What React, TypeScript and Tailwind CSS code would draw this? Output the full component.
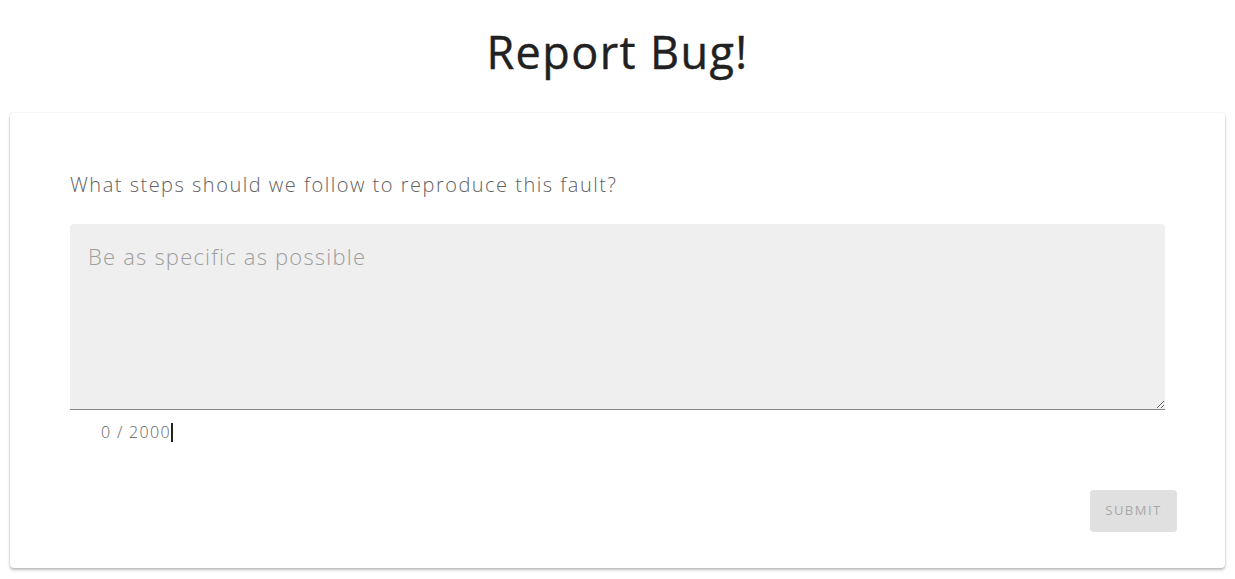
import React, { useState } from 'react';

export default function App() {
  const [text, setText] = useState('');
  const MAX = 2000;

  return (
    <div className="min-h-screen bg-white px-[10px] pt-[24px] font-['Open_Sans','Noto_Sans',sans-serif]">
      <h1 className="text-center text-[45px] leading-[56px] font-normal tracking-[1.4px] text-[#212121] [-webkit-text-stroke:0.4px_#212121]">Report Bug!</h1>

      <div className="mt-[33px] rounded-[4px] bg-white shadow-[0_2px_3px_rgba(0,0,0,0.25),0_0_2px_rgba(0,0,0,0.12)] pt-[58px] pb-[36px]">
        <div className="px-[60px]">
          <p className="text-[20px] leading-[28px] font-light tracking-[1.5px] text-[#616161]">What steps should we follow to reproduce this fault?</p>

          <textarea
            value={text}
            onChange={(e) => setText(e.target.value.slice(0, MAX))}
            placeholder="Be as specific as possible"
            className="mt-[25px] block w-full h-[186px] rounded-t-[4px] bg-[#efefef] border-b border-[#8a8a8a] px-[18px] pt-[17px] text-[22px] leading-[30px] font-light tracking-[1.2px] text-[#333] placeholder:text-[#9e9e9e] outline-none"
          />

          <div className="pl-[31px] pt-[11px] text-[16px] leading-[22px] font-light tracking-[1.3px] text-[#616161] flex items-center">
            <span>{text.length} / {MAX}</span>
            <span className="inline-block w-[2px] h-[19px] bg-[#222]" />
          </div>
        </div>

        <div className="flex justify-end pr-[48px] mt-[47px]">
          <button
            disabled={text.length === 0}
            className="h-[42px] w-[87px] rounded-[4px] bg-[#e0e0e0] text-[13px] tracking-[1.5px] text-[#a8a8a8] uppercase"
          >
            Submit
          </button>
        </div>
      </div>
    </div>
  );
}
